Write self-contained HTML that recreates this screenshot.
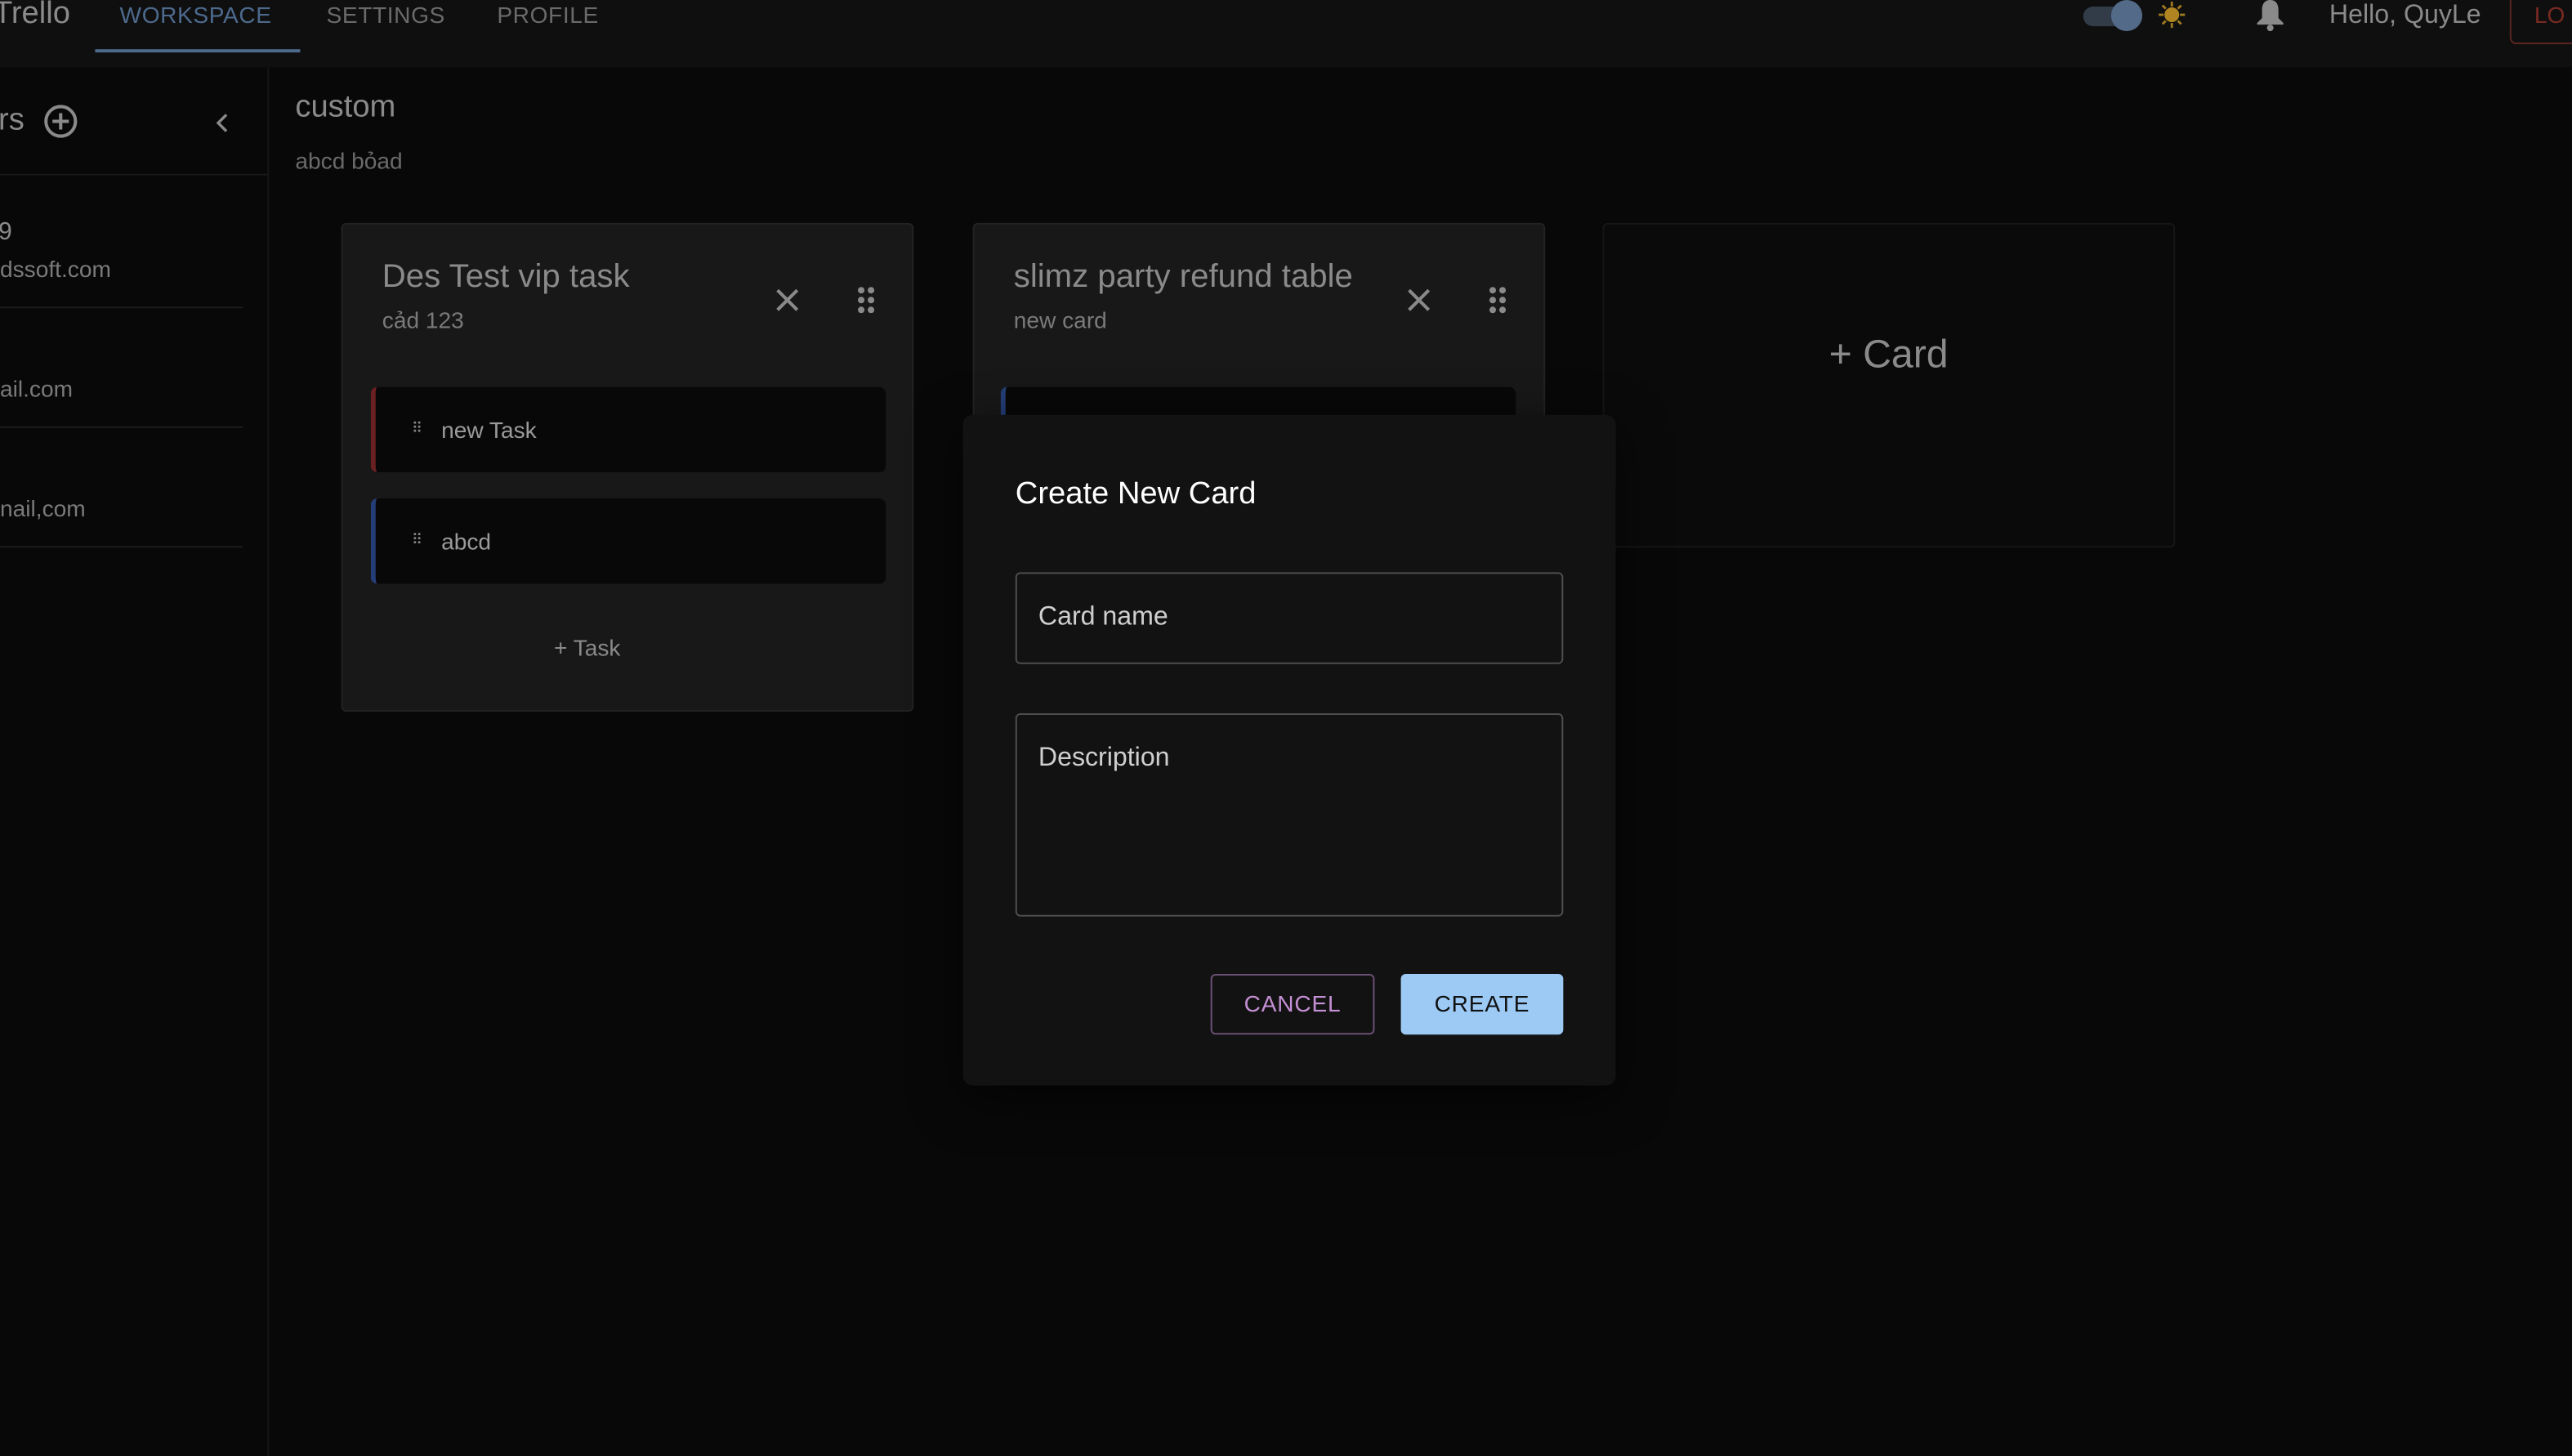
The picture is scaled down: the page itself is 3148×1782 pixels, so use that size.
<!DOCTYPE html><html><head><meta charset="utf-8"><style>
html,body{margin:0;padding:0;width:3148px;height:1782px;overflow:hidden;background:#080808;font-family:"Liberation Sans",sans-serif}
#w{position:absolute;left:0;top:0;width:1568px;height:888px;transform:scale(2.0077,2.0068);transform-origin:0 0;background:#080808}
.a{position:absolute}
.col{position:absolute;background:#181818;border:1px solid #222;border-radius:3px;box-sizing:border-box}
.t{position:absolute;left:17px;width:314px;height:52px;background:#080808;border-radius:4px;color:#9a9a9a;font-size:14px;box-sizing:border-box}
</style></head><body><div id="w">
<div class="a" style="left:0;top:0;width:1568px;height:41px;background:#0f0f0f"></div>
<div class="a" style="left:-4px;top:-2px;color:#8a8a8a;font-size:19px">Trello</div>
<div class="a" style="left:73px;top:1px;color:#4d6a8d;font-size:14px;letter-spacing:.3px">WORKSPACE</div>
<div class="a" style="left:58px;top:30px;width:125px;height:2px;background:#4d6a8d"></div>
<div class="a" style="left:199px;top:1px;color:#6a6a6a;font-size:14px;letter-spacing:.3px">SETTINGS</div>
<div class="a" style="left:303px;top:1px;color:#6a6a6a;font-size:14px;letter-spacing:.3px">PROFILE</div>
<div class="a" style="left:1270px;top:4px;width:32px;height:12px;border-radius:6px;background:#323c48"></div>
<div class="a" style="left:1287px;top:0px;width:19px;height:19px;border-radius:50%;background:#536a88"></div>
<svg class="a" style="left:1315px;top:0" width="18" height="18" viewBox="0 0 18 18"><g stroke="#a07a20" stroke-width="1.4"><path d="M9 1v3M9 14v3M1 9h3M14 9h3M3.3 3.3l2 2M12.7 12.7l2 2M3.3 14.7l2-2M12.7 5.3l2-2"/></g><circle cx="9" cy="9" r="4.5" fill="#b08420"/></svg>
<svg class="a" style="left:1375px;top:0" width="18" height="20" viewBox="0 0 18 20"><path d="M9 0c3 0 5 2 5 6v5l3 3v1H1v-1l3-3V6c0-4 2-6 5-6z" fill="#8a8a8a"/><circle cx="9" cy="17" r="2" fill="#8a8a8a"/></svg>
<div class="a" style="left:1420px;top:1px;color:#8a8a8a;font-size:16px">Hello, QuyLe</div>
<div class="a" style="left:1530px;top:-6px;width:60px;height:33px;border:1px solid #5a2520;border-radius:4px;box-sizing:border-box"></div>
<div class="a" style="left:1545px;top:1px;color:#7a2a22;font-size:14px">LO</div>
<div class="a" style="left:163px;top:41px;width:1px;height:847px;background:#151515"></div>
<div class="a" style="left:-1px;top:63px;color:#8a8a8a;font-size:19px">rs</div>
<svg class="a" style="left:26px;top:63px" width="22" height="22" viewBox="0 0 22 22"><circle cx="11" cy="11" r="9" fill="none" stroke="#8a8a8a" stroke-width="2"/><path d="M11 6v10M6 11h10" stroke="#8a8a8a" stroke-width="2"/></svg>
<svg class="a" style="left:130px;top:68px" width="12" height="14" viewBox="0 0 12 14"><path d="M8 2L3 7l5 5" fill="none" stroke="#8a8a8a" stroke-width="1.7"/></svg>
<div class="a" style="left:0;top:106px;width:163px;height:1px;background:#181818"></div>
<div class="a" style="left:-1px;top:133px;color:#8a8a8a;font-size:15px">9</div>
<div class="a" style="left:0;top:156px;color:#7a7a7a;font-size:14px">dssoft.com</div>
<div class="a" style="left:0;top:187px;width:148px;height:1px;background:#1c1c1c"></div>
<div class="a" style="left:0;top:229px;color:#7a7a7a;font-size:14px">ail.com</div>
<div class="a" style="left:0;top:260px;width:148px;height:1px;background:#1c1c1c"></div>
<div class="a" style="left:0;top:302px;color:#7a7a7a;font-size:14px">nail,com</div>
<div class="a" style="left:0;top:333px;width:148px;height:1px;background:#1c1c1c"></div>
<div class="a" style="left:180px;top:55px;color:#8a8a8a;font-size:19px">custom</div>
<div class="a" style="left:180px;top:90px;color:#6a6a6a;font-size:14px">abcd bỏad</div>

<div class="col" style="left:208px;top:136px;width:349px;height:298px">
<div class="a" style="left:24px;top:21px;color:#8a8a8a;font-size:20px">Des Test vip task</div>
<div class="a" style="left:24px;top:50px;color:#7a7a7a;font-size:14px">cảd 123</div>
<svg class="a" style="left:263px;top:38px" width="16" height="16" viewBox="0 0 16 16"><path d="M2 2l12 12M14 2L2 14" stroke="#8a8a8a" stroke-width="2"/></svg>
<svg class="a" style="left:314px;top:38px" width="10" height="16" viewBox="0 0 10 16"><g fill="#8a8a8a"><circle cx="2" cy="2" r="2"/><circle cx="8" cy="2" r="2"/><circle cx="2" cy="8" r="2"/><circle cx="8" cy="8" r="2"/><circle cx="2" cy="14" r="2"/><circle cx="8" cy="14" r="2"/></g></svg>
<div class="t" style="top:99px;border-left:3px solid #6a2020"><span class="a" style="left:22px;top:20px;font-size:9px;color:#888">⠿</span><span class="a" style="left:40px;top:18px">new Task</span></div>
<div class="t" style="top:167px;border-left:3px solid #243e78"><span class="a" style="left:22px;top:20px;font-size:9px;color:#888">⠿</span><span class="a" style="left:40px;top:18px">abcd</span></div>
<div class="a" style="left:49px;width:200px;top:250px;text-align:center;color:#8a8a8a;font-size:14px">+ Task</div>
</div>

<div class="col" style="left:593px;top:136px;width:349px;height:140px">
<div class="a" style="left:24px;top:21px;color:#8a8a8a;font-size:20px">slimz party refund table</div>
<div class="a" style="left:24px;top:50px;color:#7a7a7a;font-size:14px">new card</div>
<svg class="a" style="left:263px;top:38px" width="16" height="16" viewBox="0 0 16 16"><path d="M2 2l12 12M14 2L2 14" stroke="#8a8a8a" stroke-width="2"/></svg>
<svg class="a" style="left:314px;top:38px" width="10" height="16" viewBox="0 0 10 16"><g fill="#8a8a8a"><circle cx="2" cy="2" r="2"/><circle cx="8" cy="2" r="2"/><circle cx="2" cy="8" r="2"/><circle cx="8" cy="8" r="2"/><circle cx="2" cy="14" r="2"/><circle cx="8" cy="14" r="2"/></g></svg>
<div class="a" style="left:16px;top:99px;width:314px;height:40px;box-sizing:border-box;background:#080808;border-left:3px solid #243e78;border-radius:4px 4px 0 0"></div>
</div>

<div class="a" style="left:977px;top:136px;width:349px;height:198px;border:1px solid #161616;border-radius:3px;box-sizing:border-box;background:#0a0a0a"></div>
<div class="a" style="left:1115px;top:203px;color:#8a8a8a;font-size:24px">+ Card</div>

<div class="a" style="left:587px;top:253px;width:398px;height:409px;background:#121212;border-radius:6px;box-shadow:0 8px 30px rgba(0,0,0,.6)">
<div class="a" style="left:32px;top:38px;color:#fff;font-size:19px">Create New Card</div>
<div class="a" style="left:32px;top:96px;width:334px;height:56px;border:1px solid #4d4d4d;border-radius:3px;box-sizing:border-box"></div>
<div class="a" style="left:46px;top:115px;color:#cfcfcf;font-size:16px">Card name</div>
<div class="a" style="left:32px;top:182px;width:334px;height:124px;border:1px solid #4d4d4d;border-radius:3px;box-sizing:border-box"></div>
<div class="a" style="left:46px;top:201px;color:#cfcfcf;font-size:16px">Description</div>
<div class="a" style="left:151px;top:341px;width:100px;height:37px;border:1px solid #6a4f74;border-radius:3px;box-sizing:border-box;color:#c48fd4;font-size:14px;text-align:center;line-height:35px;letter-spacing:.4px">CANCEL</div>
<div class="a" style="left:267px;top:341px;width:99px;height:37px;background:#9ccaf5;border-radius:3px;color:#111;font-size:14px;text-align:center;line-height:37px;letter-spacing:.4px">CREATE</div>
</div>
</div></body></html>
